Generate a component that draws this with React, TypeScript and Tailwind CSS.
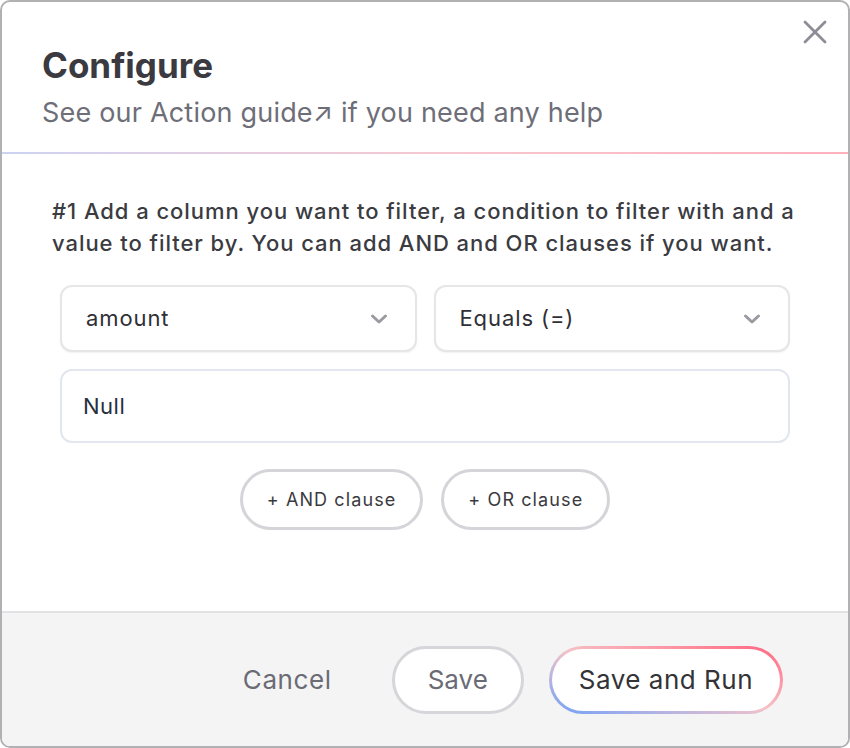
import React from "react";

const Chevron = () => (
  <svg width="20" height="20" viewBox="0 0 20 20" fill="none" className="text-[#9a9aa2]">
    <path d="M3.5 7l6.5 6 6.5-6" stroke="currentColor" strokeWidth="3" strokeLinecap="round" strokeLinejoin="round" />
  </svg>
);

const Select = ({ value }: { value: string }) => (
  <div className="flex-1 h-[67px] flex items-center justify-between pl-[24px] pr-[26px] rounded-[12px] border-2 border-[#e6e6e8] bg-white shadow-[0_1px_2px_rgba(0,0,0,0.06)]">
    <span className="text-[22px] tracking-[0.9px] text-[#2f2f36]">{value}</span>
    <Chevron />
  </div>
);

export default function App() {
  return (
    <div className="w-[850px] h-[748px] bg-white font-['Inter','Liberation_Sans',sans-serif]">
      <div className="w-full h-full flex flex-col rounded-[10px] border-2 border-[#b1b1b3] overflow-hidden bg-white">
        <div className="relative px-[40px] pt-[42px] pb-[22px]">
          <button className="absolute right-[19px] top-[16px] text-[#8d8d95]">
            <svg width="28" height="28" viewBox="0 0 28 28" fill="none">
              <path d="M4 4l20 20M24 4L4 24" stroke="currentColor" strokeWidth="2.8" strokeLinecap="round" />
            </svg>
          </button>
          <h1 className="text-[35px] leading-[42px] font-bold text-[#3a3a40]">Configure</h1>
          <p className="mt-[10px] text-[27px] leading-[34px] tracking-[0.2px] text-[#6e6e78]">
            See our Action guide<span className="text-[26px]">↗</span> if you need any help
          </p>
        </div>
        <div className="h-[2px] bg-linear-to-r from-[#cdd3f2] via-[#f6c8d2] to-[#ffb0bd]" />

        <div className="flex-1 flex flex-col px-[58px] pt-[41px]">
          <p className="-ml-[8px] -mr-[10px] text-[22px] leading-[32px] font-medium tracking-[0.95px] text-[#3b3b42]">
            #1 Add a column you want to filter, a condition to filter with and a value to filter by. You can add AND and OR clauses if you want.
          </p>
          <div className="mt-[26px] flex gap-[17px]">
            <Select value="amount" />
            <Select value="Equals (=)" />
          </div>
          <div className="mt-[17px] h-[74px] flex items-center px-[21px] rounded-[12px] border-2 border-[#e1e6ef] bg-white">
            <span className="text-[22px] tracking-[0.5px] text-[#27303f]">Null</span>
          </div>
          <div className="mt-[26px] flex justify-center gap-[18px]">
            <button className="h-[61px] px-[24px] rounded-full border-[3px] border-[#d5d5d9] bg-white text-[18px] tracking-[1.1px] text-[#3a3a40]">
              + AND clause
            </button>
            <button className="h-[61px] px-[24px] rounded-full border-[3px] border-[#d5d5d9] bg-white text-[18px] tracking-[1.1px] text-[#3a3a40]">
              + OR clause
            </button>
          </div>
        </div>

        <div className="h-[135px] border-t-2 border-[#e3e3e5] bg-[#f4f4f4] flex items-center justify-end pr-[65px]">
          <button className="mr-[60px] text-[26px] tracking-[0.6px] text-[#6b6b75]">Cancel</button>
          <button className="mr-[25px] h-[68px] px-[33px] rounded-full border-[3px] border-[#d6d6da] bg-white text-[26px] text-[#6b6b75]">
            Save
          </button>
          <div className="p-[3px] rounded-full bg-linear-to-tr from-[#6d9ff7] via-[#f3c2c8] to-[#ff5f7e]">
            <button className="h-[62px] px-[27px] rounded-full bg-white text-[26px] tracking-[0.5px] text-[#333338]">
              Save and Run
            </button>
          </div>
        </div>
      </div>
    </div>
  );
}
